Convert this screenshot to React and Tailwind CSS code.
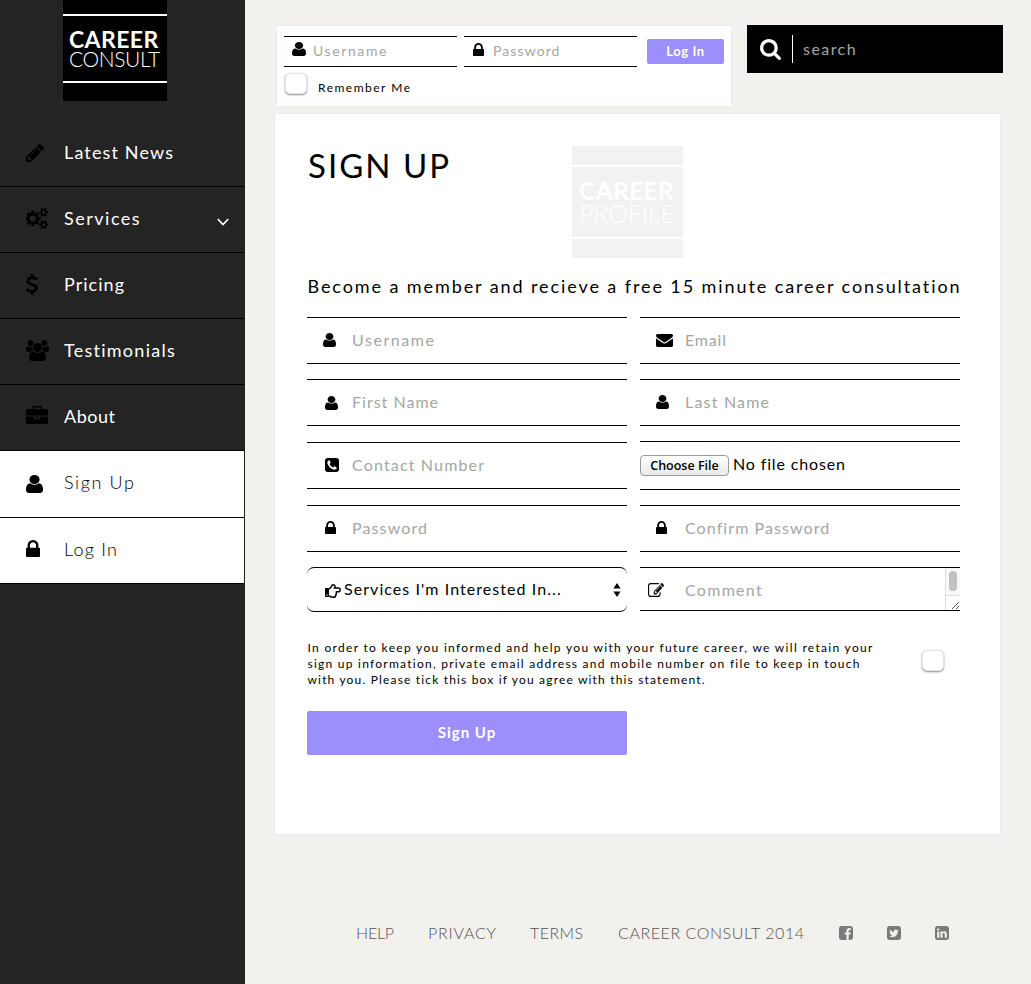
import React from 'react';
import { FaRegHandPointRight } from 'react-icons/fa';

const ICONS = {
  user: ['256 128 1280 1536', 'M1536 1399q0 109-62.5 187t-150.5 78h-854q-88 0-150.5-78t-62.5-187q0-85 8.5-160.5t31.5-152 58.5-131 94-89 134.5-34.5q131 128 313 128t313-128q76 0 134.5 34.5t94 89 58.5 131 31.5 152 8.5 160.5zm-256-887q0 159-112.5 271.5t-271.5 112.5-271.5-112.5-112.5-271.5 112.5-271.5 271.5-112.5 271.5 112.5 112.5 271.5z'],
  lock: ['320 128 1152 1408', 'M640 768h512v-192q0-106-75-181t-181-75-181 75-75 181v192zm832 96v576q0 40-28 68t-68 28h-960q-40 0-68-28t-28-68v-576q0-40 28-68t68-28h32v-192q0-184 132-316t316-132 316 132 132 316v192h32q40 0 68 28t28 68z'],
  pencil: ['128 149 1515 1515', 'M491 1536l91-91-235-235-91 91v107h128v128h107zm523-928q0-22-22-22-10 0-17 7l-542 542q-7 7-7 17 0 22 22 22 10 0 17-7l542-542q7-7 7-17zm-54-192l416 416-832 832h-416v-416zm683 96q0 53-37 90l-166 166-416-416 166-165q36-38 90-38 53 0 91 38l235 234q37 39 37 91z'],
  cogs: ['0 16 1920 1760', 'M832 896q0-106-75-181t-181-75-181 75-75 181 75 181 181 75 181-75 75-181zm768 512q0-52-38-90t-90-38-90 38-38 90q0 53 37.5 90.5t90.5 37.5 90.5-37.5 37.5-90.5zm0-1024q0-52-38-90t-90-38-90 38-38 90q0 53 37.5 90.5t90.5 37.5 90.5-37.5 37.5-90.5zm-384 421v185q0 10-7 19.5t-16 10.5l-155 24q-11 35-32 76 34 48 90 115 7 11 7 20 0 12-7 19-23 30-82.5 89.5t-78.5 59.5q-11 0-21-7l-115-90q-37 19-77 31-11 108-23 155-7 24-30 24h-186q-11 0-20-7.5t-10-17.5l-23-153q-34-10-75-31l-118 89q-7 7-20 7-11 0-21-8-144-133-144-160 0-9 7-19 10-14 41-53t47-61q-23-44-35-82l-152-24q-10-1-17-9.5t-7-19.5v-185q0-10 7-19.5t16-10.5l155-24q11-35 32-76-34-48-90-115-7-11-7-20 0-12 7-20 22-30 82-89t79-59q11 0 21 7l115 90q34-18 77-32 11-108 23-154 7-24 30-24h186q11 0 20 7.5t10 17.5l23 153q34 10 75 31l118-89q8-7 20-7 11 0 21 8 144 133 144 160 0 8-7 19-12 16-42 54t-45 60q23 48 34 82l152 23q10 2 17 10.5t7 19.5zm640 533v140q0 16-149 31-12 27-30 52 51 113 51 138 0 4-4 7-122 71-124 71-8 0-46-47t-52-68q-20 2-30 2t-30-2q-14 21-52 68t-46 47q-2 0-124-71-4-3-4-7 0-25 51-138-18-25-30-52-149-15-149-31v-140q0-16 149-31 13-29 30-52-51-113-51-138 0-4 4-7 4-2 35-20t59-34 30-16q8 0 46 46.5t52 67.5q20-2 30-2t30 2q51-71 92-112l6-2q4 0 124 70 4 3 4 7 0 25-51 138 17 23 30 52 149 15 149 31zm0-1024v140q0 16-149 31-12 27-30 52 51 113 51 138 0 4-4 7-122 71-124 71-8 0-46-47t-52-68q-20 2-30 2t-30-2q-14 21-52 68t-46 47q-2 0-124-71-4-3-4-7 0-25 51-138-18-25-30-52-149-15-149-31v-140q0-16 149-31 13-29 30-52-51-113-51-138 0-4 4-7 4-2 35-20t59-34 30-16q8 0 46 46.5t52 67.5q20-2 30-2t30 2q51-71 92-112l6-2q4 0 124 70 4 3 4 7 0 25-51 138 17 23 30 52 149 15 149 31z'],
  dollar: ['428 0 934 1792', 'M1362 1185q0 153-99.5 263.5t-258.5 136.5v175q0 14-9 23t-23 9h-135q-13 0-22.5-9.5t-9.5-22.5v-175q-66-9-127.5-31t-101.5-44.5-74-48-46.5-37.5-17.5-18q-17-21-2-41l103-135q7-10 23-12 15-2 24 9l2 2q113 99 243 125 37 8 74 8 81 0 142.5-43t61.5-122q0-28-15-53t-33.5-42-58.5-37.5-66-32-80-32.5q-39-16-61.5-25t-61.5-26.5-62.5-31-56.5-35.5-53.5-42.5-43.5-49-35.5-58-21-66.5-8.5-78q0-138 98-242t255-134v-180q0-13 9.5-22.5t22.5-9.5h135q14 0 23 9t9 23v176q57 6 110.5 23t87 33.5 63.5 37.5 39 29 15 14q17 18 5 38l-81 146q-8 15-23 16-14 3-27-7-3-3-14.5-12t-39-26.5-58.5-32-74.5-26-85.5-11.5q-95 0-155 43t-60 111q0 26 8.5 48t29.5 41.5 39.5 33 56 31 60.5 27 70 27.5q53 20 81 31.5t76 35 75.5 42.5 62 50 53 63.5 31.5 76.5 13 94z'],
  users: ['64 0 1920 1792', 'M657 896q-162 5-265 128h-134q-82 0-138-40.5t-56-118.5q0-353 124-353 6 0 43.5 21t97.5 42.5 119 21.5q67 0 133-23-5 37-5 66 0 159 90 256zm1071 637q0 120-73 189.5t-194 69.5h-874q-121 0-194-69.5t-73-189.5q0-53 3.5-103.5t14-109 26.5-108.5 43-97.5 62-81 85.5-53.5 111.5-20q10 0 43 21.5t73 48 107 48 135 21.5 135-21.5 107-48 73-48 43-21.5q61 0 111.5 20t85.5 53.5 62 81 43 97.5 26.5 108.5 14 109 3.5 103.5zm-1024-1277q0 106-75 181t-181 75-181-75-75-181 75-181 181-75 181 75 75 181zm704 384q0 159-112.5 271.5t-271.5 112.5-271.5-112.5-112.5-271.5 112.5-271.5 271.5-112.5 271.5 112.5 112.5 271.5zm576 225q0 78-56 118.5t-138 40.5h-134q-103-123-265-128 90-97 90-256 0-29-5-66 66 23 133 23 59 0 119-21.5t97.5-42.5 43.5-21q124 0 124 353zm-128-609q0 106-75 181t-181 75-181-75-75-181 75-181 181-75 181 75 75 181z'],
  briefcase: ['0 0 1792 1536', 'M640 256h512v-128h-512v128zm1152 640v480q0 66-47 113t-113 47h-1472q-66 0-113-47t-47-113v-480h672v160q0 26 19 45t45 19h320q26 0 45-19t19-45v-160h672zm-768 0v128h-256v-128h256zm768-480v384h-1792v-384q0-66 47-113t113-47h352v-160q0-40 28-68t68-28h576q40 0 68 28t28 68v160h352q66 0 113 47t47 113z'],
  envelope: ['0 256 1792 1408', 'M1792 710v794q0 66-47 113t-113 47h-1472q-66 0-113-47t-47-113v-794q44 49 101 87 362 246 497 345 57 42 92.5 65.5t94.5 48 110 24.5h2q51 0 110-24.5t94.5-48 92.5-65.5q170-123 498-345 57-39 100-87zm0-294q0 79-49 151t-122 123q-376 261-468 325-10 7-42.5 31t-54 38.5-52 32.5-57.5 27-50 9h-2q-23 0-50-9t-57.5-27-52-32.5-54-38.5-42.5-31q-91-64-262-182.5t-205-142.5q-62-42-117-115.5t-55-136.5q0-78 41.5-130t118.5-52h1472q65 0 112.5 47t47.5 113z'],
  phone: ['128 128 1536 1536', 'M1408 1193q0-11-2-16t-18-16.5-40.5-25-47.5-26.5-45.5-25-28.5-15q-5-3-19-13t-25-15-21-5q-15 0-36.5 20.5t-39.5 45-38.5 45-33.5 20.5q-7 0-16.5-3.5t-15.5-6.5-17-9.5-14-8.5q-99-55-170-126.5t-127-170.5q-2-3-8.5-14t-9.5-17-6.5-15.5-3.5-16.5q0-13 20.5-33.5t45-38.5 45-39.5 20.5-36.5q0-10-5-21t-15-25-13-19q-3-6-15-28.5t-25-45.5-26.5-47.5-25-40.5-16.5-18-16-2q-48 0-101 22-46 21-80 94.5t-34 130.5q0 16 2.5 34t5 30.5 9 33 10 29.5 12.5 33 11 30q60 164 216.5 320.5t320.5 216.5q6 2 30 11t33 12.5 29.5 10 33 9 30.5 5 34 2.5q57 0 130.5-34t94.5-80q22-53 22-101zm256-777v960q0 119-84.5 203.5t-203.5 84.5h-960q-119 0-203.5-84.5t-84.5-203.5v-960q0-119 84.5-203.5t203.5-84.5h960q119 0 203.5 84.5t84.5 203.5z'],
  search: ['64 128 1664 1664', 'M1216 832q0-185-131.5-316.5t-316.5-131.5-316.5 131.5-131.5 316.5 131.5 316.5 316.5 131.5 316.5-131.5 131.5-316.5zm512 832q0 52-38 90t-90 38q-54 0-90-38l-343-342q-179 124-399 124-143 0-273.5-55.5t-225-150-150-225-55.5-273.5 55.5-273.5 150-225 225-150 273.5-55.5 273.5 55.5 225 150 150 225 55.5 273.5q0 220-124 399l343 343q37 37 37 90z'],
  facebook: ['128 128 1536 1536', 'M1376 128q119 0 203.5 84.5t84.5 203.5v960q0 119-84.5 203.5t-203.5 84.5h-188v-595h199l30-232h-229v-148q0-56 23.5-84t91.5-28l122-1v-207q-63-9-178-9-136 0-217.5 80t-81.5 226v171h-200v232h200v595h-532q-119 0-203.5-84.5t-84.5-203.5v-960q0-119 84.5-203.5t203.5-84.5h960z'],
  twitter: ['128 128 1536 1536', 'M1408 610q-56 25-121 34 68-40 93-117-65 38-134 51-61-66-153-66-87 0-148.5 61.5t-61.5 148.5q0 29 5 48-129-7-242-65t-192-155q-29 50-29 106 0 114 91 175-47-1-100-26v2q0 75 50 133.5t123 72.5q-29 8-51 8-13 0-39-4 21 63 74.5 104t121.5 42q-116 90-261 90-26 0-50-3 148 94 322 94 112 0 210-35.5t168-95 120.5-137 75-162 24.5-168.5q0-18-1-27 63-45 105-109zm256-194v960q0 119-84.5 203.5t-203.5 84.5h-960q-119 0-203.5-84.5t-84.5-203.5v-960q0-119 84.5-203.5t203.5-84.5h960q119 0 203.5 84.5t84.5 203.5z'],
  linkedin: ['128 128 1536 1536', 'M365 1414h231v-694h-231v694zm246-908q-1-52-36-86t-93-34-94.5 34-36.5 86q0 51 35.5 85.5t92.5 34.5h1q59 0 95-34.5t36-85.5zm585 908h231v-398q0-154-73-233t-193-79q-136 0-209 117h2v-101h-231q3 66 0 694h231v-388q0-38 7-56 15-35 45-59.5t74-24.5q116 0 116 157v371zm468-998v960q0 119-84.5 203.5t-203.5 84.5h-960q-119 0-203.5-84.5t-84.5-203.5v-960q0-119 84.5-203.5t203.5-84.5h960q119 0 203.5 84.5t84.5 203.5z'],
  edit: ['0 128 1792 1408', 'M888 1184l116-116-152-152-116 116v56h96v96h56zm440-720q-16-16-33 1l-350 350q-17 17-1 33t33-1l350-350q17-17 1-33zm80 594v190q0 119-84.5 203.5t-203.5 84.5h-832q-119 0-203.5-84.5t-84.5-203.5v-832q0-119 84.5-203.5t203.5-84.5h832q63 0 117 25 15 7 18 23 3 17-9 29l-49 49q-14 14-32 8-23-6-45-6h-832q-66 0-113 47t-47 113v832q0 66 47 113t113 47h832q66 0 113-47t47-113v-126q0-13 9-22l64-64q15-15 35-7t20 29zm-96-738l288 288-672 672h-288v-288zm444 132l-92 92-288-288 92-92q28-28 68-28t68 28l152 152q28 28 28 68t-28 68z'],
};

function Icon({ name, className }) {
  const [box, path] = ICONS[name];
  return (
    <svg viewBox={box} preserveAspectRatio="none" fill="currentColor" className={`shrink-0 ${className}`}>
      <path d={path} />
    </svg>
  );
}

const NAV = [
  { label: 'Latest News', icon: 'pencil', size: 'w-[18px] h-[18px] -mt-[2px]', track: 'tracking-[1.14px]' },
  { label: 'Services', icon: 'cogs', size: 'w-[23px] h-[21px] -mt-[2px]', track: 'tracking-[1.5px]', arrow: true },
  { label: 'Pricing', icon: 'dollar', size: 'w-[12px] h-[21px] -mt-[2px]', track: 'tracking-[1.03px]' },
  { label: 'Testimonials', icon: 'users', size: 'w-[23px] h-[21px] -mt-[2px]', track: 'tracking-[1.26px]' },
  { label: 'About', icon: 'briefcase', size: 'w-[22px] h-[18px] -mt-[5px]', track: 'tracking-[0.52px]' },
  { label: 'Sign Up', icon: 'user', size: 'w-[17px] h-[18px] -mt-px', track: 'tracking-[1.6px]', light: true, tall: true },
  { label: 'Log In', icon: 'lock', size: 'w-[14px] h-[17px] -mt-[4px]', track: 'tracking-[1.25px]', light: true },
];

function NavItem({ label, icon, size, track, arrow, light, tall }) {
  return (
    <a
      className={`flex w-[244px] items-center border-b border-black pl-[26px] ${tall ? 'h-[67px]' : 'h-[66px]'} ${
        light ? 'bg-white font-light text-black' : 'text-white'
      }`}
    >
      <span className="flex w-[38px] items-center text-black">
        <Icon name={icon} className={size} />
      </span>
      <span className={`-mt-1 flex-1 text-[18px] leading-6 ${track}`}>{label}</span>
      {arrow && (
        <svg viewBox="0 0 12 8" className="mt-[5px] mr-[15px] h-2 w-3 fill-none stroke-white stroke-[1.7]">
          <path d="M0.8 1L6 6.5L11.2 1" />
        </svg>
      )}
    </a>
  );
}

function Field({ icon, iconClass, label, track, className = '' }) {
  return (
    <div className={`flex h-[47px] items-center border-y border-black text-[#a5a5a5] ${className}`}>
      <span className="flex w-[45px] text-black">
        <Icon name={icon} className={iconClass} />
      </span>
      <span className={`-mt-px text-base leading-5 ${track}`}>{label}</span>
    </div>
  );
}

function CheckBox({ className = '' }) {
  return (
    <span
      className={`block h-[21px] w-[22px] rounded-[5px] border border-[#e2e2e2] bg-white shadow-[0_1px_2px_rgba(0,0,0,0.45)] ${className}`}
    />
  );
}

export default function App() {
  return (
    <div className="flex h-[984px] w-[1031px] overflow-hidden bg-[#f3f1ed] font-[Lato,sans-serif] text-black">
      <aside className="h-full w-[245px] shrink-0 bg-[#242424]">
        <div className="ml-[63px] flex h-[101px] w-[104px] flex-col bg-black pt-[14px] text-white">
          <div className="flex h-[69px] flex-col border-y-2 border-white pt-[13px] pl-[6px] whitespace-nowrap">
            <span className="text-[23px] leading-[20px] font-bold tracking-[0.4px]">CAREER</span>
            <span className="mt-px text-[21px] leading-[18px] font-light tracking-[-0.4px]">CONSULT</span>
          </div>
        </div>
        <nav className="mt-5 flex flex-col">
          {NAV.map((item) => (
            <NavItem key={item.label} {...item} />
          ))}
        </nav>
      </aside>

      <div className="flex flex-1 flex-col pt-[25px] pl-[29px]">
        <header className="flex items-start">
          <form className="ml-[2px] h-[82px] w-[456px] border border-[#ebebeb] bg-white pt-[10px] pl-[7px]">
            <div className="flex items-start">
              <div className="flex h-[31px] w-[173px] items-center border-y border-black pl-2 text-[#a5a5a5]">
                <Icon name="user" className="mr-[7px] -mt-[5px] h-[14px] w-[14px] text-black" />
                <span className="-mt-px text-sm leading-4 tracking-[1.6px]">Username</span>
              </div>
              <div className="ml-[7px] flex h-[31px] w-[173px] items-center border-y border-black pl-[9px] text-[#a5a5a5]">
                <Icon name="lock" className="mr-[9px] -mt-[5px] h-[13px] w-[11px] text-black" />
                <span className="-mt-px text-sm leading-4 tracking-[1.1px]">Password</span>
              </div>
              <button className="mt-[3px] ml-[10px] h-[25px] w-[77px] rounded-[2px] bg-[#9c8ffc] text-[13px] leading-[23px] font-bold tracking-[0.6px] text-white">
                Log In
              </button>
            </div>
            <label className="mt-[6px] flex items-start pl-[1px]">
              <CheckBox />
              <span className="mt-[7px] ml-[11px] text-xs leading-4 tracking-[1.5px]">Remember Me</span>
            </label>
          </form>
          <div className="ml-[15px] flex h-12 w-64 items-center bg-black pl-[13px]">
            <Icon name="search" className="h-[21px] w-[21px] text-white" />
            <span className="ml-[11px] h-7 w-px bg-white" />
            <span className="ml-[10px] text-base leading-5 tracking-[1.45px] text-[#a5a5a5]">search</span>
          </div>
        </header>

        <main className="mt-[6px] h-[722px] w-[727px] border border-[#ebebeb] bg-white pt-8 pl-8">
          <div className="flex h-[112px]">
            <h1 className="w-[265px] pt-[1px] pl-px text-[33px] leading-9 tracking-[2px]">SIGN UP</h1>
            <div className="flex h-[112px] w-[111px] flex-col bg-[#f2f2f2] pt-[19px] whitespace-nowrap text-white">
              <div className="flex h-[74px] flex-col border-y-2 border-white pt-[12px] pl-[7px]">
                <span className="text-[25px] leading-[23px] font-bold">CAREER</span>
                <span className="mt-px text-[25px] leading-[20px] font-light tracking-[-0.2px]">PROFILE</span>
              </div>
            </div>
          </div>
          <p className="mt-4 pl-[0.5px] text-[18px] leading-6 tracking-[1.91px] whitespace-nowrap">
            Become a member and recieve a free 15 minute career consultation
          </p>

          <div className="mt-[19px] flex gap-[13px]">
            <div className="flex w-80 flex-col">
              <Field icon="user" label="Username" track="tracking-[1.56px]" iconClass="-mt-px ml-4 h-[14px] w-[13px]" />
              <Field icon="user" label="First Name" track="tracking-[1.01px]" className="mt-[15px]" iconClass="mt-px ml-[18px] h-[14px] w-[13px]" />
              <Field icon="phone" label="Contact Number" track="tracking-[1.16px]" className="mt-4" iconClass="-mt-px ml-[18px] h-[14px] w-[14px]" />
              <Field icon="lock" label="Password" track="tracking-[1.12px]" className="mt-4" iconClass="-mt-[3px] ml-[18px] h-[13px] w-[11px]" />
              <div className="mt-[15px] flex h-[45px] items-center rounded-[7px] border-y border-black pr-[6px] pl-[18px]">
                <FaRegHandPointRight className="mt-[3px] h-4 w-4" />
                <span className="-mt-[2px] ml-[3px] flex-1 text-base leading-5 tracking-[1.06px]">Services I'm Interested In...</span>
                <svg viewBox="0 0 8 14" className="h-[14px] w-2">
                  <path d="M4 0L7.6 5.6H0.4zM4 14L7.6 8.4H0.4z" />
                </svg>
              </div>
            </div>
            <div className="flex w-80 flex-col">
              <Field icon="envelope" label="Email" track="tracking-[0.81px]" iconClass="ml-4 h-[13px] w-[17px]" />
              <Field icon="user" label="Last Name" track="tracking-[1.19px]" className="mt-[15px]" iconClass="-mt-px ml-4 h-[14px] w-[13px]" />
              <div className="mt-[15px] flex h-[49px] items-center border-y border-black">
                <button className="h-[21px] w-[89px] rounded-[4px] border border-[#9a9a9a] bg-linear-to-b from-white to-[#e9e9e9] font-['Open_Sans'] text-[12.5px] leading-[19px] font-semibold whitespace-nowrap">
                  Choose File
                </button>
                <span className="-mt-1 ml-1 text-base leading-5 tracking-[0.85px]">No file chosen</span>
              </div>
              <Field icon="lock" label="Confirm Password" track="tracking-[1.08px]" className="mt-[15px]" iconClass="-mt-[2px] ml-4 h-[13px] w-[11px]" />
              <div className="mt-[15px] flex h-11 items-center border-y border-black text-[#a5a5a5]">
                <span className="flex w-[45px] pl-2 text-black">
                  <Icon name="edit" className="mt-px h-[14px] w-4" />
                </span>
                <span className="mt-[2px] flex-1 text-base leading-5 tracking-[1.3px]">Comment</span>
                <div className="flex h-full w-[15px] flex-col border-l border-[#dedede]">
                  <div className="flex h-7 justify-center border-b border-[#dedede] bg-[#f8f8f8] pt-[3px]">
                    <span className="h-5 w-2 rounded-full bg-[#c1c1c1]" />
                  </div>
                  <svg viewBox="0 0 14 14" className="h-[14px] w-[14px] stroke-[#555] stroke-1">
                    <path d="M6 13L13 6M10 13L13 10" />
                  </svg>
                </div>
              </div>
            </div>
          </div>

          <div className="mt-[28px] flex">
            <p className="w-[615px] pl-[0.5px] text-xs leading-4 whitespace-nowrap">
              <span className="tracking-[1.31px]">In order to keep you informed and help you with your future career, we will retain your</span>
              <br />
              <span className="tracking-[1.25px]">sign up information, private email address and mobile number on file to keep in touch</span>
              <br />
              <span className="tracking-[1.17px]">with you. Please tick this box if you agree with this statement.</span>
            </p>
            <CheckBox className="mt-[10px]" />
          </div>
          <button className="mt-[23px] block h-11 w-80 rounded-[2px] bg-[#9c8ffc] pb-[2px] text-[15px] leading-[42px] font-bold tracking-[1px] text-white">
            Sign Up
          </button>
        </main>

        <footer className="mt-[88px] flex items-center pl-[82px] text-base leading-5 font-light whitespace-nowrap text-[#555]">
          <span className="w-[72px] tracking-[-0.2px]">HELP</span>
          <span className="w-[102px] tracking-[0.77px]">PRIVACY</span>
          <span className="w-[88px] tracking-[0.45px]">TERMS</span>
          <span className="w-[221px] tracking-[0.56px]">CAREER CONSULT 2014</span>
          <div className="flex gap-[34px] text-[#7b7a78]">
            <Icon name="facebook" className="h-[14px] w-[14px]" />
            <Icon name="twitter" className="h-[14px] w-[14px]" />
            <Icon name="linkedin" className="h-[14px] w-[14px]" />
          </div>
        </footer>
      </div>
    </div>
  );
}
